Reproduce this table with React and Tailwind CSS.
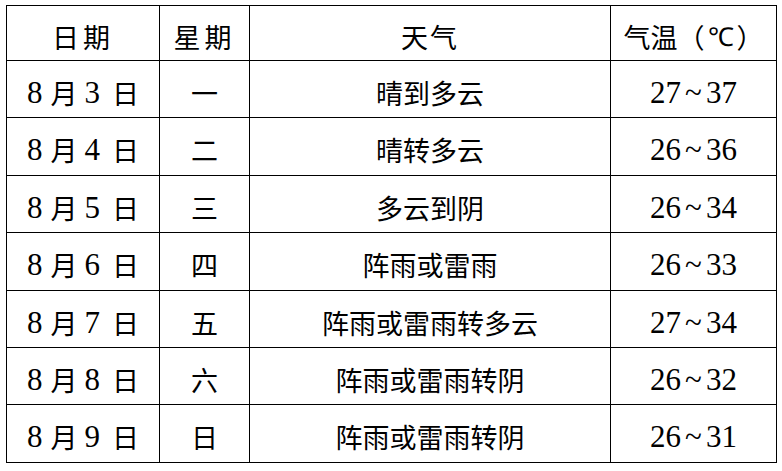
const rows = [
  ["3", "一", "晴到多云", "27", "37"],
  ["4", "二", "晴转多云", "26", "36"],
  ["5", "三", "多云到阴", "26", "34"],
  ["6", "四", "阵雨或雷雨", "26", "33"],
  ["7", "五", "阵雨或雷雨转多云", "27", "34"],
  ["8", "六", "阵雨或雷雨转阴", "26", "32"],
  ["9", "日", "阵雨或雷雨转阴", "26", "31"],
];

const cell = "border-r-[1.5px] border-b-[1.5px] border-black flex items-center justify-center pt-[8px]";
const serif = { fontFamily: '"Liberation Serif", "Times New Roman", serif' };

function Num({ children, className = "" }) {
  return (
    <span className={`font-['Liberation_Serif'] text-[31px] ${className}`} style={serif}>
      {children}
    </span>
  );
}

export default function App() {
  return (
    <div className="bg-white w-[782px] h-[471px] pl-[6px] pt-[5px]">
      <div className="grid grid-cols-[153px_90px_361px_166px] grid-rows-[55px_repeat(7,57.4px)] w-fit border-t-[1.5px] border-l-[1.5px] border-black text-black text-[27px]">
        <div className={`${cell} tracking-[4px] font-['Noto_Sans_CJK_SC']`}>日期</div>
        <div className={`${cell} tracking-[4px] font-['Noto_Sans_CJK_SC']`}>星期</div>
        <div className={`${cell} tracking-[2px] font-['Noto_Sans_CJK_SC']`}>天气</div>
        <div className={cell}>
          <span className="font-['Noto_Sans_CJK_SC']">气温（</span>
          <span className="font-['Liberation_Serif'] text-[26px] mx-[3px]" style={serif}>℃</span>
          <span className="font-['Noto_Sans_CJK_SC']">）</span>
        </div>
        {rows.map(([d, w, wx, lo, hi]) => (
          <div key={d} className="contents">
            <div className={cell}>
              <Num>8</Num>
              <span className="font-['Noto_Sans_CJK_SC'] ml-[8px]">月</span>
              <Num className="ml-[7px]">{d}</Num>
              <span className="font-['Noto_Sans_CJK_SC'] ml-[12px]">日</span>
            </div>
            <div className={`${cell} font-['Noto_Sans_CJK_SC']`}>{w}</div>
            <div className={`${cell} font-['Noto_Sans_CJK_SC']`}>{wx}</div>
            <div className={cell}>
              <Num>{lo}</Num>
              <Num className="mx-[4px]">~</Num>
              <Num>{hi}</Num>
            </div>
          </div>
        ))}
      </div>
    </div>
  );
}
